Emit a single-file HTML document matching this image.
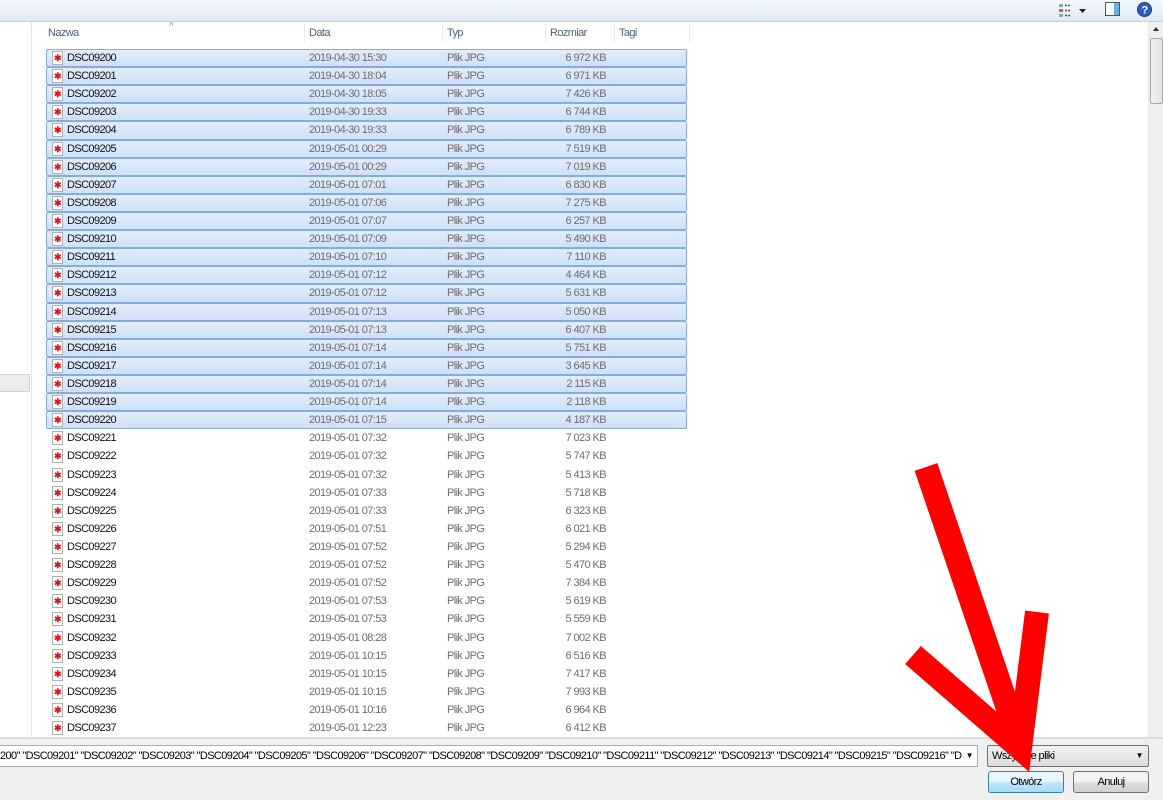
<!DOCTYPE html>
<html><head><meta charset="utf-8"><style>
*{margin:0;padding:0;box-sizing:border-box}
body{width:1163px;height:800px;overflow:hidden;background:#fff;font-family:"Liberation Sans",sans-serif;font-size:11px;letter-spacing:-0.6px;position:relative}
.top{position:absolute;left:0;top:0;width:1163px;height:22px;background:linear-gradient(#f5f9fd,#dfe9f5);border-bottom:1px solid #c3d3e6}
.nav{position:absolute;left:0;top:22px;width:32px;height:715px;border-right:1px solid #e3e8ee;background:#fff}
.navsel{position:absolute;left:0;top:352px;width:30px;height:18px;background:#ececec;border:1px solid #d4d4d4;border-left:none}
.hdr{position:absolute;top:24px;left:33px;width:1115px;height:18px;color:#4c607a}
.hdr span{position:absolute;top:3px}
.hdr i{position:absolute;top:0;width:1px;height:18px;background:#e6ebf1}
.list{position:absolute;left:46px;top:49px;width:641px}
.r{position:relative;height:18.11px;color:#6d6d6d;white-space:nowrap;border:1px solid transparent}
.r.s{background:linear-gradient(#e2edfb,#cfe0f6);border:1px solid #84acdd;border-radius:2px}
.r .ic{position:absolute;left:5px;top:1px;width:11px;height:14px;border:1px solid #b0b0b0;background:#fff}
.r .ic:after{content:"✱";position:absolute;left:1px;top:0;color:#e3141b;font-size:9px;line-height:12px}
.r .n{position:absolute;left:20px;top:2px;color:#111}
.r .d{position:absolute;left:262px;top:2px}
.r .t{position:absolute;left:400px;top:2px}
.r .z{position:absolute;right:80px;top:2px}
.sb{position:absolute;left:1148px;top:22px;width:15px;height:715px;background:#f0f0f0;border-left:1px solid #e6e6e6}
.thumb{position:absolute;left:1px;top:16px;width:13px;height:66px;background:linear-gradient(90deg,#f3f3f3,#e2e2e2);border:1px solid #a8a8a8;border-radius:2px}
.bot{position:absolute;left:0;top:737px;width:1163px;height:63px;background:#f0f0f0;border-top:2px solid #dcdcdc}
.fn{position:absolute;left:-1px;top:745px;width:979px;height:22px;background:#fff;border:1px solid #abadb3;font-size:11px;line-height:20px;white-space:nowrap;overflow:hidden;color:#000}
.cb{position:absolute;left:987px;top:745px;width:162px;height:22px;background:linear-gradient(#f2f2f2,#dcdcdc);border:1px solid #707070;border-radius:2px;padding-left:4px;line-height:20px}
.btn{position:absolute;top:771px;height:22px;width:76px;text-align:center;line-height:20px;background:linear-gradient(#f3f3f3 45%,#dcdcdc 55%,#d0d0d0);border:1px solid #707070;border-radius:3px}
</style></head><body>
<div class="top">
<svg style="position:absolute;left:1058px;top:3px" width="40" height="15"><rect x="1" y="1" width="4" height="3" fill="#8aa"/><rect x="1" y="6" width="4" height="3" fill="#d55"/><rect x="1" y="11" width="4" height="3" fill="#8aa"/><path d="M7 2.5h6M7 7.5h6M7 12.5h6" stroke="#555" stroke-width="1.5" stroke-dasharray="2 1"/><path d="M21 6h7l-3.5 4z" fill="#223"/></svg>
<svg style="position:absolute;left:1105px;top:2px" width="15" height="15"><rect x="0.5" y="0.5" width="14" height="13" fill="#fff" stroke="#456"/><rect x="9" y="1" width="5" height="12" fill="#6ab0e0"/></svg>
<svg style="position:absolute;left:1137px;top:2px" width="15" height="15"><circle cx="7.5" cy="7.5" r="7" fill="#2f5ec0" stroke="#1a3a80"/><text x="7.5" y="11.5" font-size="11" font-weight="bold" fill="#fff" text-anchor="middle" font-family="Liberation Sans">?</text></svg>
</div>
<div class="nav"><div class="navsel"></div></div>
<div class="hdr">
<span style="left:15px">Nazwa</span><span style="left:136px;top:-4px;font-size:8px;color:#7a8aa0">˄</span>
<i style="left:271px"></i><span style="left:276px">Data</span>
<i style="left:409px"></i><span style="left:414px">Typ</span>
<i style="left:512px"></i><span style="left:517px">Rozmiar</span>
<i style="left:581px"></i><span style="left:586px">Tagi</span>
<i style="left:656px"></i>
</div>
<div class="list">
<div class="r s"><b class="ic"></b><span class="n">DSC09200</span><span class="d">2019-04-30 15:30</span><span class="t">Plik JPG</span><span class="z">6 972 KB</span></div>
<div class="r s"><b class="ic"></b><span class="n">DSC09201</span><span class="d">2019-04-30 18:04</span><span class="t">Plik JPG</span><span class="z">6 971 KB</span></div>
<div class="r s"><b class="ic"></b><span class="n">DSC09202</span><span class="d">2019-04-30 18:05</span><span class="t">Plik JPG</span><span class="z">7 426 KB</span></div>
<div class="r s"><b class="ic"></b><span class="n">DSC09203</span><span class="d">2019-04-30 19:33</span><span class="t">Plik JPG</span><span class="z">6 744 KB</span></div>
<div class="r s"><b class="ic"></b><span class="n">DSC09204</span><span class="d">2019-04-30 19:33</span><span class="t">Plik JPG</span><span class="z">6 789 KB</span></div>
<div class="r s"><b class="ic"></b><span class="n">DSC09205</span><span class="d">2019-05-01 00:29</span><span class="t">Plik JPG</span><span class="z">7 519 KB</span></div>
<div class="r s"><b class="ic"></b><span class="n">DSC09206</span><span class="d">2019-05-01 00:29</span><span class="t">Plik JPG</span><span class="z">7 019 KB</span></div>
<div class="r s"><b class="ic"></b><span class="n">DSC09207</span><span class="d">2019-05-01 07:01</span><span class="t">Plik JPG</span><span class="z">6 830 KB</span></div>
<div class="r s"><b class="ic"></b><span class="n">DSC09208</span><span class="d">2019-05-01 07:06</span><span class="t">Plik JPG</span><span class="z">7 275 KB</span></div>
<div class="r s"><b class="ic"></b><span class="n">DSC09209</span><span class="d">2019-05-01 07:07</span><span class="t">Plik JPG</span><span class="z">6 257 KB</span></div>
<div class="r s"><b class="ic"></b><span class="n">DSC09210</span><span class="d">2019-05-01 07:09</span><span class="t">Plik JPG</span><span class="z">5 490 KB</span></div>
<div class="r s"><b class="ic"></b><span class="n">DSC09211</span><span class="d">2019-05-01 07:10</span><span class="t">Plik JPG</span><span class="z">7 110 KB</span></div>
<div class="r s"><b class="ic"></b><span class="n">DSC09212</span><span class="d">2019-05-01 07:12</span><span class="t">Plik JPG</span><span class="z">4 464 KB</span></div>
<div class="r s"><b class="ic"></b><span class="n">DSC09213</span><span class="d">2019-05-01 07:12</span><span class="t">Plik JPG</span><span class="z">5 631 KB</span></div>
<div class="r s"><b class="ic"></b><span class="n">DSC09214</span><span class="d">2019-05-01 07:13</span><span class="t">Plik JPG</span><span class="z">5 050 KB</span></div>
<div class="r s"><b class="ic"></b><span class="n">DSC09215</span><span class="d">2019-05-01 07:13</span><span class="t">Plik JPG</span><span class="z">6 407 KB</span></div>
<div class="r s"><b class="ic"></b><span class="n">DSC09216</span><span class="d">2019-05-01 07:14</span><span class="t">Plik JPG</span><span class="z">5 751 KB</span></div>
<div class="r s"><b class="ic"></b><span class="n">DSC09217</span><span class="d">2019-05-01 07:14</span><span class="t">Plik JPG</span><span class="z">3 645 KB</span></div>
<div class="r s"><b class="ic"></b><span class="n">DSC09218</span><span class="d">2019-05-01 07:14</span><span class="t">Plik JPG</span><span class="z">2 115 KB</span></div>
<div class="r s"><b class="ic"></b><span class="n">DSC09219</span><span class="d">2019-05-01 07:14</span><span class="t">Plik JPG</span><span class="z">2 118 KB</span></div>
<div class="r s"><b class="ic"></b><span class="n">DSC09220</span><span class="d">2019-05-01 07:15</span><span class="t">Plik JPG</span><span class="z">4 187 KB</span></div>
<div class="r"><b class="ic"></b><span class="n">DSC09221</span><span class="d">2019-05-01 07:32</span><span class="t">Plik JPG</span><span class="z">7 023 KB</span></div>
<div class="r"><b class="ic"></b><span class="n">DSC09222</span><span class="d">2019-05-01 07:32</span><span class="t">Plik JPG</span><span class="z">5 747 KB</span></div>
<div class="r"><b class="ic"></b><span class="n">DSC09223</span><span class="d">2019-05-01 07:32</span><span class="t">Plik JPG</span><span class="z">5 413 KB</span></div>
<div class="r"><b class="ic"></b><span class="n">DSC09224</span><span class="d">2019-05-01 07:33</span><span class="t">Plik JPG</span><span class="z">5 718 KB</span></div>
<div class="r"><b class="ic"></b><span class="n">DSC09225</span><span class="d">2019-05-01 07:33</span><span class="t">Plik JPG</span><span class="z">6 323 KB</span></div>
<div class="r"><b class="ic"></b><span class="n">DSC09226</span><span class="d">2019-05-01 07:51</span><span class="t">Plik JPG</span><span class="z">6 021 KB</span></div>
<div class="r"><b class="ic"></b><span class="n">DSC09227</span><span class="d">2019-05-01 07:52</span><span class="t">Plik JPG</span><span class="z">5 294 KB</span></div>
<div class="r"><b class="ic"></b><span class="n">DSC09228</span><span class="d">2019-05-01 07:52</span><span class="t">Plik JPG</span><span class="z">5 470 KB</span></div>
<div class="r"><b class="ic"></b><span class="n">DSC09229</span><span class="d">2019-05-01 07:52</span><span class="t">Plik JPG</span><span class="z">7 384 KB</span></div>
<div class="r"><b class="ic"></b><span class="n">DSC09230</span><span class="d">2019-05-01 07:53</span><span class="t">Plik JPG</span><span class="z">5 619 KB</span></div>
<div class="r"><b class="ic"></b><span class="n">DSC09231</span><span class="d">2019-05-01 07:53</span><span class="t">Plik JPG</span><span class="z">5 559 KB</span></div>
<div class="r"><b class="ic"></b><span class="n">DSC09232</span><span class="d">2019-05-01 08:28</span><span class="t">Plik JPG</span><span class="z">7 002 KB</span></div>
<div class="r"><b class="ic"></b><span class="n">DSC09233</span><span class="d">2019-05-01 10:15</span><span class="t">Plik JPG</span><span class="z">6 516 KB</span></div>
<div class="r"><b class="ic"></b><span class="n">DSC09234</span><span class="d">2019-05-01 10:15</span><span class="t">Plik JPG</span><span class="z">7 417 KB</span></div>
<div class="r"><b class="ic"></b><span class="n">DSC09235</span><span class="d">2019-05-01 10:15</span><span class="t">Plik JPG</span><span class="z">7 993 KB</span></div>
<div class="r"><b class="ic"></b><span class="n">DSC09236</span><span class="d">2019-05-01 10:16</span><span class="t">Plik JPG</span><span class="z">6 964 KB</span></div>
<div class="r"><b class="ic"></b><span class="n">DSC09237</span><span class="d">2019-05-01 12:23</span><span class="t">Plik JPG</span><span class="z">6 412 KB</span></div>
</div>
<div class="sb"><div style="position:absolute;left:4px;top:5px;border:3px solid transparent;border-bottom:4px solid #333;border-top:none;width:0"></div><div class="thumb"></div></div>
<div class="bot"></div>
<div class="fn"><span style="display:inline-block;width:962px;overflow:hidden">200" "DSC09201" "DSC09202" "DSC09203" "DSC09204" "DSC09205" "DSC09206" "DSC09207" "DSC09208" "DSC09209" "DSC09210" "DSC09211" "DSC09212" "DSC09213" "DSC09214" "DSC09215" "DSC09216" "DSC0921</span><span style="position:absolute;right:4px;top:0;font-size:8px">▼</span></div>
<div class="cb">Wszystkie pliki<span style="position:absolute;right:5px;top:0;font-size:8px">▼</span></div>
<div class="btn" style="left:988px;border-color:#3c7fb1;background:linear-gradient(#eaf6fd 45%,#bee6fd 55%,#a7d9f5)">Otwórz</div>
<div class="btn" style="left:1073px">Anuluj</div>
<svg style="position:absolute;left:0;top:0" width="1163" height="800"><path d="M926 467L1018 738" stroke="#f00" stroke-width="24" fill="none"/><path d="M913 655L1020 748L1037 612" stroke="#f00" stroke-width="24" fill="none" stroke-linejoin="miter"/></svg>
</body></html>
